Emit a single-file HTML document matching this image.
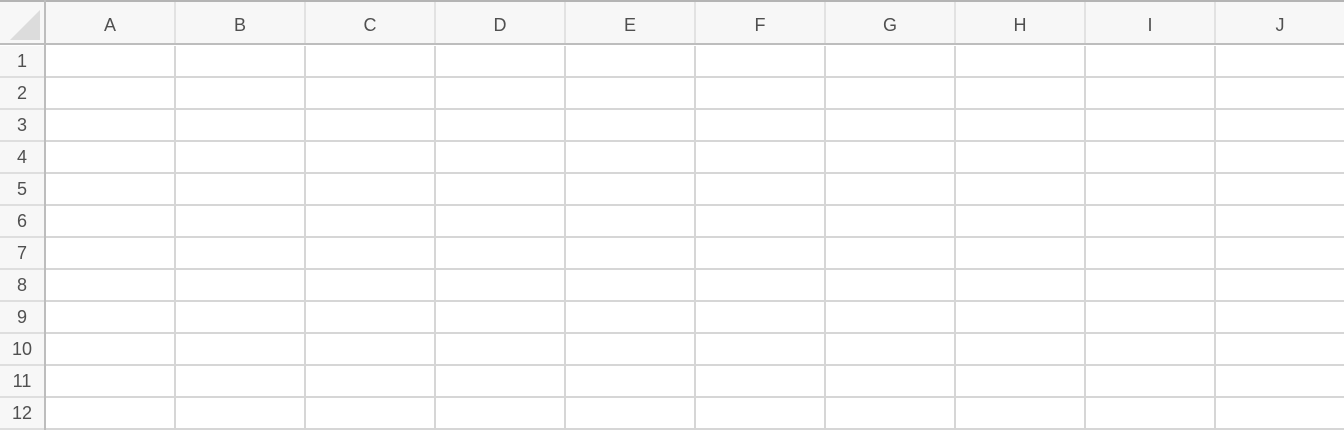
<!DOCTYPE html>
<html><head><meta charset="utf-8"><style>
html,body{margin:0;padding:0;width:1344px;height:430px;overflow:hidden;background:#fff;font-family:"Liberation Sans",sans-serif;}
.abs{position:absolute;}
#hdr{left:0;top:0;width:1344px;height:43px;background:#f7f7f7;border-top:2px solid #b4b4b4;box-sizing:border-box;}
#hdrline{left:0;top:43px;width:1344px;height:2px;background:#bdbdbd;}
#rowh{left:0;top:46px;width:44px;height:384px;background:#f7f7f7;
 background-image:repeating-linear-gradient(to bottom,transparent 0,transparent 30px,#dedede 30px,#dedede 32px);}
#vline{left:44px;top:0;width:2px;height:430px;background:#bdbdbd;}
#cells{left:46px;top:46px;width:1298px;height:384px;
 background-image:repeating-linear-gradient(to right,transparent 0,transparent 128px,#d6d6d6 128px,#d6d6d6 130px),
 repeating-linear-gradient(to bottom,transparent 0,transparent 30px,#d6d6d6 30px,#d6d6d6 32px);}
#hsep{left:46px;top:2px;width:1298px;height:41px;
 background-image:repeating-linear-gradient(to right,transparent 0,transparent 128px,#e2e2e2 128px,#e2e2e2 130px);}
.ch{position:absolute;top:14px;width:130px;text-align:center;font-size:18px;color:#505050;line-height:22px;}
.rh{position:absolute;left:0;width:44px;text-align:center;font-size:18px;color:#505050;line-height:32px;}
</style></head><body>
<div id="hdr" class="abs"></div>
<div id="hsep" class="abs"></div>
<div id="hdrline" class="abs"></div>
<div id="rowh" class="abs"></div>
<div id="cells" class="abs"></div>
<div id="vline" class="abs"></div>
<svg class="abs" style="left:0;top:0" width="44" height="43"><polygon points="10,40 40,40 40,10" fill="#dcdcdc"/></svg>
<div class="ch" style="left:45px">A</div>
<div class="ch" style="left:175px">B</div>
<div class="ch" style="left:305px">C</div>
<div class="ch" style="left:435px">D</div>
<div class="ch" style="left:565px">E</div>
<div class="ch" style="left:695px">F</div>
<div class="ch" style="left:825px">G</div>
<div class="ch" style="left:955px">H</div>
<div class="ch" style="left:1085px">I</div>
<div class="ch" style="left:1215px">J</div>
<div class="rh" style="top:45px">1</div>
<div class="rh" style="top:77px">2</div>
<div class="rh" style="top:109px">3</div>
<div class="rh" style="top:141px">4</div>
<div class="rh" style="top:173px">5</div>
<div class="rh" style="top:205px">6</div>
<div class="rh" style="top:237px">7</div>
<div class="rh" style="top:269px">8</div>
<div class="rh" style="top:301px">9</div>
<div class="rh" style="top:333px">10</div>
<div class="rh" style="top:365px">11</div>
<div class="rh" style="top:397px">12</div>
</body></html>
